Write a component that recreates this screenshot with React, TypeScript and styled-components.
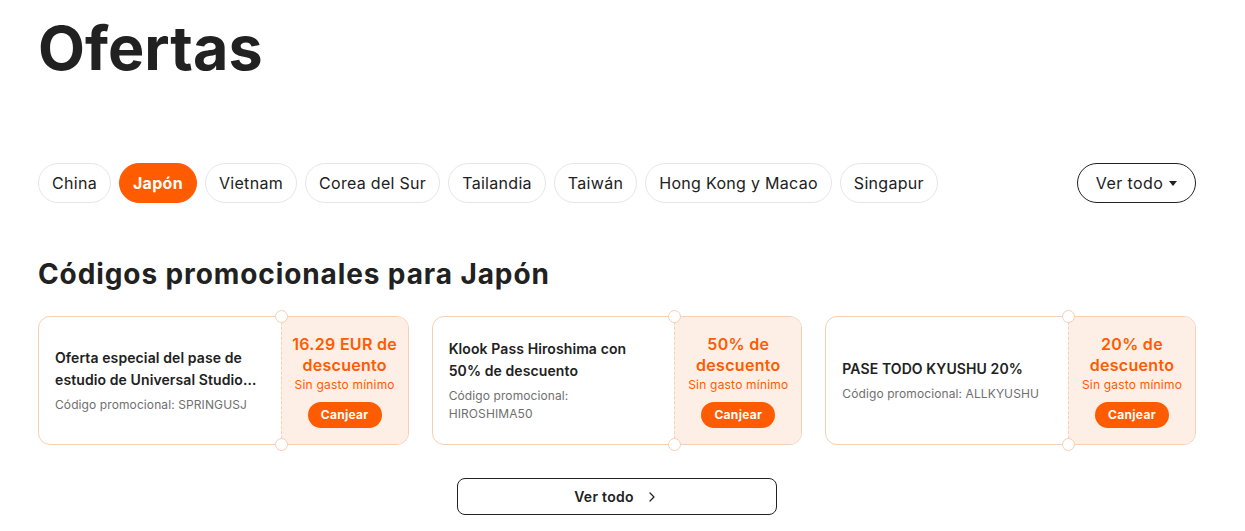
import React, { useState } from 'react';
import styled, { createGlobalStyle } from 'styled-components';
import { ChevronRight } from 'lucide-react';

const GlobalStyle = createGlobalStyle`
  body {
    margin: 0;
    background: #fff;
    font-family: Inter, "Noto Sans", sans-serif;
    color: #212121;
  }
`;

const ORANGE = '#ff5b00';
const PEACH = '#fdefe5';
const EDGE = '#f6cfb4';

const Page = styled.div`
  width: 1245px;
  padding: 0 49px 0 38px;
  box-sizing: border-box;
  display: flex;
  flex-direction: column;
`;

const Title = styled.h1`
  margin: 10px 0 0;
  font-size: 61px;
  line-height: 76px;
  font-weight: 700;
  letter-spacing: 0;
`;

const Tabs = styled.div`
  display: flex;
  align-items: center;
  gap: 8px;
  margin-top: 77px;
`;

const Chip = styled.button<{ $active?: boolean }>`
  height: 40px;
  padding: 0 13px;
  border-radius: 20px;
  border: 1px solid ${(p) => (p.$active ? ORANGE : '#e6e6e6')};
  background: ${(p) => (p.$active ? ORANGE : '#fff')};
  color: ${(p) => (p.$active ? '#fff' : '#212121')};
  font-family: inherit;
  font-size: 16px;
  font-weight: ${(p) => (p.$active ? 700 : 400)};
  letter-spacing: 0.3px;
  cursor: pointer;
`;

const Spacer = styled.div`
  flex: 1;
`;

const MoreButton = styled.button`
  height: 40px;
  width: 119px;
  border-radius: 20px;
  border: 1px solid #212121;
  background: #fff;
  color: #212121;
  font-family: inherit;
  font-size: 16px;
  letter-spacing: 0.4px;
  display: flex;
  align-items: center;
  justify-content: center;
  gap: 6px;
  cursor: pointer;
`;

const Caret = styled.span`
  width: 0;
  height: 0;
  border-left: 4px solid transparent;
  border-right: 4px solid transparent;
  border-top: 5px solid #212121;
`;

const Heading = styled.h2`
  margin: 53px 0 0;
  font-size: 28px;
  line-height: 36px;
  font-weight: 700;
  letter-spacing: 0.9px;
`;

const Cards = styled.div`
  display: grid;
  grid-template-columns: repeat(3, 1fr);
  gap: 23px;
  margin-top: 24px;
`;

const Card = styled.div`
  display: flex;
  height: 129px;
  box-sizing: border-box;
  border: 1px solid ${EDGE};
  border-radius: 12px;
`;

const CardInfo = styled.div`
  flex: 1;
  display: flex;
  flex-direction: column;
  justify-content: center;
  gap: 5px;
  padding: 0 20px 0 16px;
  min-width: 0;
`;

const CardTitle = styled.div`
  max-height: 44px;
  font-size: 14px;
  line-height: 22px;
  font-weight: 600;
  color: #212121;
  letter-spacing: 0.1px;
  display: -webkit-box;
  -webkit-line-clamp: 2;
  -webkit-box-orient: vertical;
  overflow: hidden;
`;

const CardCode = styled.div`
  padding-right: 8px;
  font-size: 12px;
  line-height: 18px;
  color: #6f6f6f;
  letter-spacing: 0.1px;
`;

const CardOffer = styled.div`
  position: relative;
  width: 127px;
  box-sizing: border-box;
  flex-shrink: 0;
  background: ${PEACH};
  border-left: 1px dashed ${EDGE};
  border-radius: 0 11px 11px 0;
  display: flex;
  flex-direction: column;
  align-items: center;
  justify-content: center;
  text-align: center;
  padding: 0 4px;

  &::before,
  &::after {
    content: '';
    position: absolute;
    left: -7px;
    width: 11px;
    height: 11px;
    border-radius: 50%;
    background: #fff;
    border: 1px solid ${EDGE};
  }
  &::before {
    top: -7px;
  }
  &::after {
    bottom: -7px;
  }
`;

const Discount = styled.div`
  font-size: 16px;
  line-height: 21px;
  font-weight: 600;
  color: ${ORANGE};
  letter-spacing: 0.3px;
`;

const MinSpend = styled.div`
  font-size: 12px;
  line-height: 18px;
  color: ${ORANGE};
  letter-spacing: 0.2px;
`;

const Redeem = styled.button`
  margin-top: 8px;
  height: 26px;
  padding: 0 13px;
  border: none;
  border-radius: 13px;
  background: ${ORANGE};
  color: #fff;
  font-family: inherit;
  font-size: 12px;
  font-weight: 700;
  letter-spacing: 0.3px;
  cursor: pointer;
`;

const Footer = styled.div`
  display: flex;
  justify-content: center;
  margin-top: 33px;
`;

const AllButton = styled.button`
  width: 320px;
  height: 37px;
  border: 1px solid #212121;
  border-radius: 8px;
  background: #fff;
  color: #212121;
  font-family: inherit;
  font-size: 14px;
  font-weight: 600;
  letter-spacing: 0.3px;
  display: flex;
  align-items: center;
  justify-content: center;
  gap: 10px;
  cursor: pointer;
`;

const countries = [
  'China',
  'Japón',
  'Vietnam',
  'Corea del Sur',
  'Tailandia',
  'Taiwán',
  'Hong Kong y Macao',
  'Singapur',
];

const promos = [
  {
    title: 'Oferta especial del pase de estudio de Universal Studios Japan',
    code: 'SPRINGUSJ',
    discount: '16.29 EUR de descuento',
  },
  {
    title: 'Klook Pass Hiroshima con 50% de descuento',
    code: 'HIROSHIMA50',
    discount: '50% de descuento',
  },
  {
    title: 'PASE TODO KYUSHU 20%',
    code: 'ALLKYUSHU',
    discount: '20% de descuento',
  },
];

const App: React.FC = () => {
  const [active, setActive] = useState('Japón');

  return (
    <Page>
      <GlobalStyle />
      <Title>Ofertas</Title>
      <Tabs>
        {countries.map((c) => (
          <Chip key={c} $active={c === active} onClick={() => setActive(c)}>
            {c}
          </Chip>
        ))}
        <Spacer />
        <MoreButton>
          Ver todo
          <Caret />
        </MoreButton>
      </Tabs>
      <Heading>Códigos promocionales para {active}</Heading>
      <Cards>
        {promos.map((p) => (
          <Card key={p.code}>
            <CardInfo>
              <CardTitle>{p.title}</CardTitle>
              <CardCode>{`Código promocional: ${p.code}`}</CardCode>
            </CardInfo>
            <CardOffer>
              <Discount>{p.discount}</Discount>
              <MinSpend>Sin gasto mínimo</MinSpend>
              <Redeem>Canjear</Redeem>
            </CardOffer>
          </Card>
        ))}
      </Cards>
      <Footer>
        <AllButton>
          Ver todo
          <ChevronRight size={16} strokeWidth={1.8} />
        </AllButton>
      </Footer>
    </Page>
  );
};

export default App;
